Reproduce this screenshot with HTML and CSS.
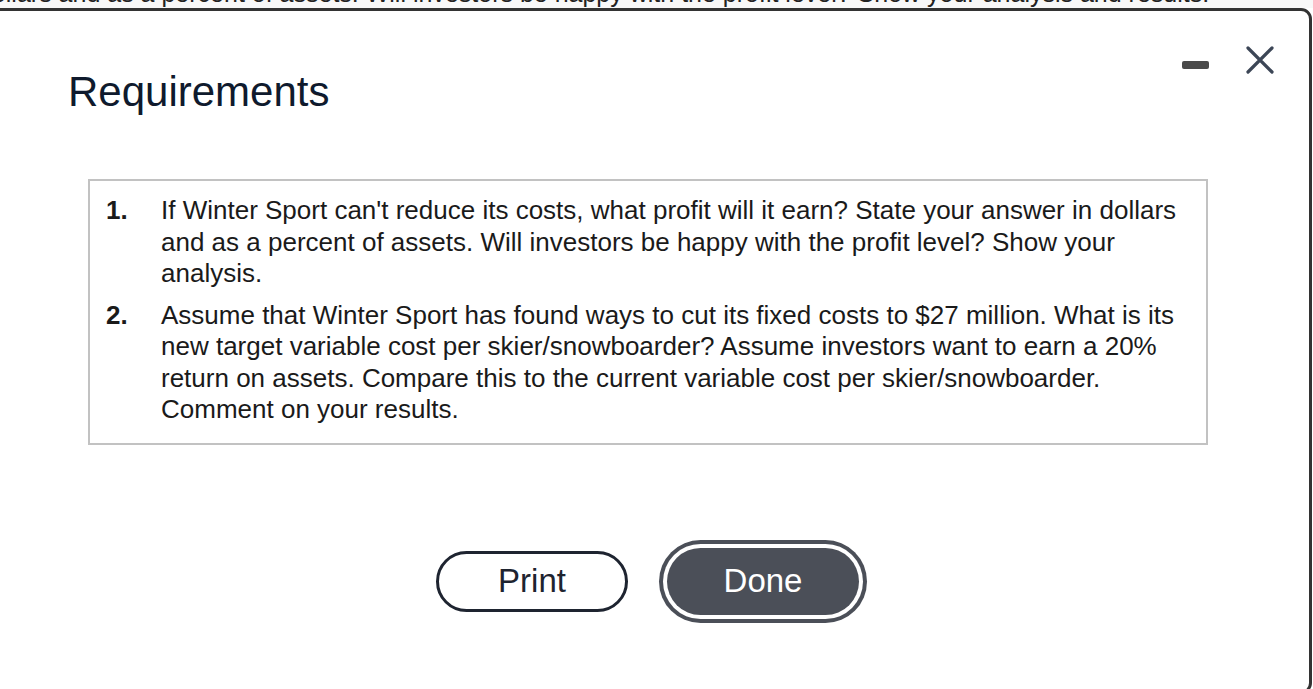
FILE: index.html
```html
<!DOCTYPE html>
<html lang="en">
<head>
<meta charset="utf-8">
<title>Requirements</title>
<link rel="stylesheet" href="styles.css">
</head>
<body>
<div class="under">
  <p class="under-text">dollars and as a percent of assets. Will investors be happy with the profit level? Show your analysis and results.</p>
</div>
<div class="modal">
  <div class="header">
    <h1 class="title">Requirements</h1>
    <div class="controls">
      <span class="minimize" aria-label="Minimize"></span>
      <svg class="close" width="28" height="28" viewBox="0 0 28 28" aria-label="Close">
        <path d="M2 2 L26 26 M26 2 L2 26" stroke="#3c4656" stroke-width="3.2" stroke-linecap="round" fill="none"/>
      </svg>
    </div>
  </div>
  <div class="box">
    <ol class="reqs">
      <li class="req">
        <span class="num">1.</span>
        <span class="txt">If Winter Sport can't reduce its costs, what profit will it earn? State your answer in dollars and as a percent of assets. Will investors be happy with the profit level? Show your analysis.</span>
      </li>
      <li class="req">
        <span class="num">2.</span>
        <span class="txt">Assume that Winter Sport has found ways to cut its fixed costs to $27 million. What is its new target variable cost per skier/snowboarder? Assume investors want to earn a 20% return on assets. Compare this to the current variable cost per skier/snowboarder. Comment on your results.</span>
      </li>
    </ol>
  </div>
  <div class="actions">
    <button class="btn btn-print">Print</button>
    <button class="btn btn-done">Done</button>
  </div>
</div>
</body>
</html>
```
FILE: styles.css
```css
html, body {
  margin: 0;
  padding: 0;
  overflow: hidden;
  background: #ffffff;
  font-family: "Liberation Sans", Arial, sans-serif;
}

.under {
  height: 8px;
  overflow: hidden;
  background: #f8f8f8;
}

.under-text {
  margin: -18px 0 0 -22px;
  font-size: 25px;
  line-height: 22px;
  color: #222;
  white-space: nowrap;
}

.modal {
  margin-left: -20px;
  width: 1326px;
  height: 680px;
  border: 3px solid #333333;
  border-radius: 0 11px 11px 0;
  background: #ffffff;
  box-sizing: content-box;
}

.header {
  display: flex;
  justify-content: space-between;
  align-items: flex-start;
  padding: 35px 35px 0 85px;
}

.title {
  margin: 22px 0 0 0;
  font-size: 42px;
  line-height: 48px;
  font-weight: 400;
  color: #0f1a2d;
}

.controls {
  display: flex;
  align-items: flex-start;
  gap: 37px;
}

.minimize {
  display: block;
  width: 27px;
  height: 8px;
  margin-top: 15px;
  border-radius: 2px;
  background: #4a4a4a;
}

.close {
  display: block;
}

.box {
  margin: 63px 0 0 105px;
  width: 1120px;
  border: 2px solid #c2c2c2;
  padding: 14px 16px 17px 16px;
  box-sizing: border-box;
}

.reqs {
  list-style: none;
  margin: 0;
  padding: 0;
}

.req {
  display: grid;
  grid-template-columns: 55px 1fr;
  font-size: 26px;
  line-height: 31.5px;
  color: #1a1a1a;
}

.req + .req {
  margin-top: 10px;
}

.num {
  font-weight: 700;
}

.actions {
  display: flex;
  justify-content: center;
  align-items: center;
  gap: 39px;
  margin-top: 103px;
  padding-left: 3px;
}

.btn {
  font-family: "Liberation Sans", Arial, sans-serif;
  font-size: 33px;
  width: 192px;
  border-radius: 40px;
  cursor: pointer;
  padding: 0;
}

.btn-print {
  height: 61px;
  border: 3px solid #1e2430;
  background: #ffffff;
  color: #1e2430;
}

.btn-done {
  height: 67px;
  border: none;
  background: #4b4f58;
  color: #ffffff;
  box-shadow: 0 0 0 4px #ffffff, 0 0 0 8px #4b4f58;
}
```
